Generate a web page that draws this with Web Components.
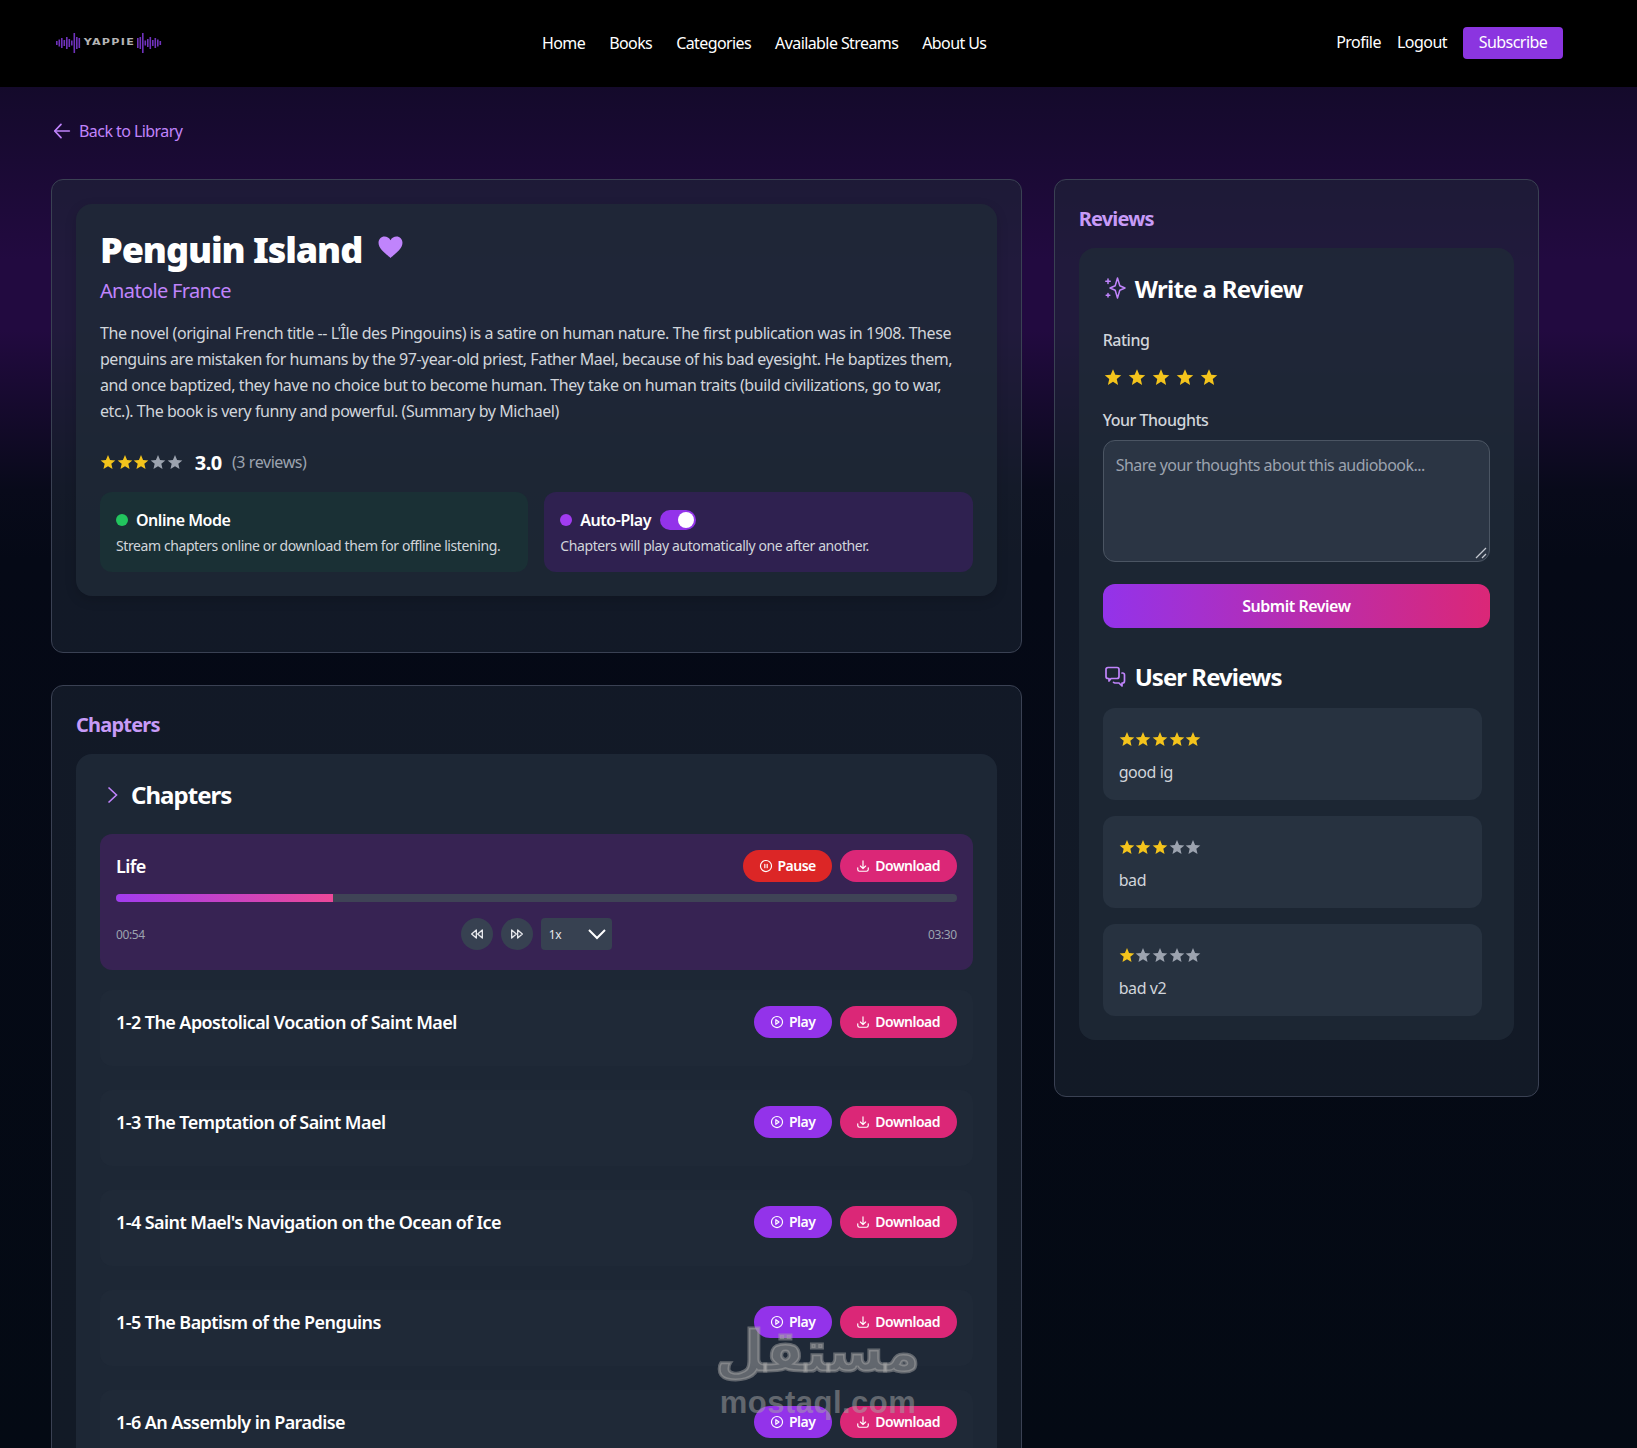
<!DOCTYPE html>
<html lang="en"><head><meta charset="utf-8"><title>Penguin Island</title>
<style>
html,body{margin:0;padding:0;height:1448px;overflow:hidden}
body{font-family:"Noto Sans","Open Sans",sans-serif;letter-spacing:-.026em;color:#fff;position:relative;
background:linear-gradient(180deg,#140a2b 87px,#220a40 260px,#220a40 330px,#120a28 430px,#080a1a 490px,#050916 560px,#040a14 1448px)}
main{display:grid;grid-template-columns:2fr 1fr;gap:32px;width:1488px;margin-left:51px;align-items:start}
main>div{display:flex;flex-direction:column;gap:32px;min-width:0}
</style></head><body>
<yp-header></yp-header>
<yp-back></yp-back>
<main>
<div>
<yp-card>
 <yp-book></yp-book>
</yp-card>
<yp-card heading="Chapters">
 <yp-chapters>
  <yp-chapter name="Life" playing></yp-chapter>
  <yp-chapter name="1-2 The Apostolical Vocation of Saint Mael"></yp-chapter>
  <yp-chapter name="1-3 The Temptation of Saint Mael"></yp-chapter>
  <yp-chapter name="1-4 Saint Mael's Navigation on the Ocean of Ice"></yp-chapter>
  <yp-chapter name="1-5 The Baptism of the Penguins"></yp-chapter>
  <yp-chapter name="1-6 An Assembly in Paradise"></yp-chapter>
 </yp-chapters>
</yp-card>
</div>
<div>
<yp-card heading="Reviews">
 <yp-reviews>
  <yp-review value="5">good ig</yp-review>
  <yp-review value="3">bad</yp-review>
  <yp-review value="1">bad v2</yp-review>
 </yp-reviews>
</yp-card>
</div>
</main>
<yp-watermark></yp-watermark>
<script>
const I={
 play:'<circle cx="12" cy="12" r="9.5"/><path d="M10 8l5.5 4-5.500 4z"/>',
 pause:'<circle cx="12" cy="12" r="9.5"/><path d="M10 9v6M14 9v6"/>',
 dl:'<path d="M3 15v3a3 3 0 0 0 3 3h12a3 3 0 0 0 3-3v-3"/><path d="M12 3v13M7.500 12l4.500 4.500 4.500-4.500"/>',
 back:'<path d="M12 4l-7.500 8 7.500 8"/><path d="M5 12H22"/>',
 rew:'<path d="M11 6l-7 6 7 6zM20 6l-7 6 7 6z"/>',
 ff:'<path d="M13 6l7 6-7 6zM4 6l7 6-7 6z"/>'
};
const svg=(p,s,extra='')=>`<svg viewBox="0 0 24 24" width="${s}" height="${s}" fill="none" stroke="currentColor" stroke-width="2" stroke-linecap="round" stroke-linejoin="round" ${extra}>${p}</svg>`;
class Base extends HTMLElement{
 connectedCallback(){if(this.shadowRoot)return;const r=this.attachShadow({mode:'open'});r.innerHTML=this.render()}
}
const def=(n,fn)=>customElements.define(n,class extends Base{render(){return fn(this)}});

def('yp-stars',el=>{
 const v=+el.getAttribute('value')||0,big=el.hasAttribute('big');
 let h='';for(let i=0;i<5;i++)h+=`<svg viewBox="0 0 24 24" fill="${i<v?'#f4c41c':'#9ca3af'}"><path d="M12 1.600l3.100 7.300 7.900.7-6 5.200 1.800 7.700-6.800-4.100-6.800 4.100 1.800-7.700-6-5.200 7.900-.7z"/></svg>`;
 return `<style>:host{display:inline-flex;align-items:center;gap:${big?6:.67}px}svg{width:${big?18:16}px;height:${big?18:16}px;display:block}</style>${h}`;
});

def('yp-header',()=>{
 const hs=[4,7,10,6,12,8,5,20,12,10];
 const draw=a=>a.map((h,i)=>`<rect x="${i*2.5}" y="${10-h/2}" width="1.6" height="${h}"/>`).join('');
 return `<style>
 :host{display:flex;align-items:center;height:87px;background:#000;padding:0 74px 0 56px;box-sizing:border-box}
 .logo{display:flex;align-items:center;width:106px;height:20px;color:#b4b4b4;font:700 8px "DejaVu Sans",sans-serif;letter-spacing:.9px;justify-content:space-between;margin-bottom:2px}
 .logo svg{fill:#6f32bb;display:block;flex:none}
 .logo span{display:block;transform:scaleX(1.4)}
 nav{display:flex;gap:24px;margin-left:380px}
 a{color:#fff;font-size:16px;text-decoration:none;line-height:24px;letter-spacing:-.037em;margin-bottom:2px}
 .r{margin-left:auto;display:flex;align-items:center;gap:16px;margin-bottom:1px}
 .r a{letter-spacing:-.033em}
 .sub{background:#8b35e0;border-radius:4px;width:100px;height:32px;display:flex;align-items:center;justify-content:center;margin-bottom:0;padding-bottom:2px;box-sizing:border-box}
 </style>
 <div class="logo"><svg width="25" height="20">${draw(hs)}</svg><span>YAPPIE</span><svg width="25" height="20">${draw([...hs].reverse())}</svg></div>
 <nav><a href="#">Home</a><a href="#">Books</a><a href="#">Categories</a><a href="#">Available Streams</a><a href="#">About Us</a></nav>
 <div class="r"><a href="#">Profile</a><a href="#">Logout</a><a class="sub" href="#">Subscribe</a></div>`;
});

def('yp-back',()=>`<style>
 :host{display:flex;align-items:center;gap:8px;margin:32px 0 36px 51px;height:24px;color:#c084fc;font-size:16px;letter-spacing:-.035em}
 svg{display:block}
 </style>${svg(I.back,20)}<span>Back to Library</span>`);

customElements.define('yp-card',class extends Base{render(){
 const h=this.getAttribute('heading');
 return `<style>
 :host{display:block;box-sizing:border-box;border:1px solid #3a4153;border-radius:12px;background:rgba(31,41,55,.5);padding:24px}
 h2{margin:0 0 14px;font-size:20px;line-height:30px;font-weight:700;color:#c79bf7;letter-spacing:-.04em}
 </style>${h?`<h2>${h}</h2>`:''}<slot></slot>`;
}});

def('yp-info',el=>{
 const t=el.getAttribute('tone');
 return `<style>
 :host{display:block;box-sizing:border-box;height:80px;padding:16px;border-radius:12px;background:${t=='green'?'#1a3035':'#2f2150'}}
 .t{display:flex;align-items:center;height:24px;font-size:16px;font-weight:600;color:#fff;letter-spacing:-.03em}
 i{width:12px;height:12px;border-radius:50%;background:${t=='green'?'#22c55e':'#a13cf0'};margin-right:8px}
 p{margin:4px 0 0;font-size:14px;line-height:20px;color:#d1d5db;letter-spacing:-.029em}
 .tg{width:36px;height:20px;border-radius:10px;background:#9333ea;margin-left:9px;position:relative}
 .tg::after{content:"";position:absolute;right:2px;top:2px;width:16px;height:16px;border-radius:50%;background:#fff}
 </style><div class="t"><i></i><span>${el.getAttribute('label')}</span>${t=='green'?'':'<div class="tg"></div>'}</div><p><slot></slot></p>`;
});

def('yp-book',()=>`<style>
 :host{display:block;border-radius:16px;background:rgba(31,41,55,.8);padding:24px;margin-bottom:32px;box-shadow:0 4px 12px rgba(0,0,0,.15)}
 h1{margin:0;display:flex;align-items:center;gap:16px;height:40px;font-size:36px;line-height:40px;font-weight:900;letter-spacing:-.03em}
 h1 span{margin-top:4px}
 h1 svg{display:block;margin-top:-2px}
 .a{margin-top:9px;font-size:20px;line-height:28px;color:#c084fc;letter-spacing:-.033em}
 .d{margin:15px 0 0;font-size:16px;line-height:26px;color:#d1d5db}
 .r{display:flex;align-items:center;margin-top:25px;height:28px;padding-bottom:2px;box-sizing:border-box}
 b{font-size:20px;margin-left:12px;font-weight:700}
 .c{margin-left:10px;color:#9ca3af;font-size:16px}
 .g{display:grid;grid-template-columns:1fr 1fr;gap:16px;margin-top:15px}
 </style>
 <h1><span>Penguin Island</span><svg width="25" height="22" viewBox="0 0 24 21" fill="#c084fc"><path d="M12 21C9 18 .5 13 .5 6.500 .5 3 3.100 .5 6.200 .5 8.600 .5 10.800 1.800 12 4 13.200 1.800 15.400 .5 17.800 .5 20.900 .5 23.500 3 23.500 6.500 23.500 13 15 18 12 21z"/></svg></h1>
 <div class="a">Anatole France</div>
 <p class="d">The novel (original French title -- L'Île des Pingouins) is a satire on human nature. The first publication was in 1908. These<br><span style="letter-spacing:-.0295em">penguins are mistaken for humans by the 97-year-old priest, Father Mael, because of his bad eyesight. He baptizes them,</span><br>and once baptized, they have no choice but to become human. They take on human traits (build civilizations, go to war,<br><span style="letter-spacing:-.0285em">etc.). The book is very funny and powerful. (Summary by Michael)</span></p>
 <div class="r"><yp-stars value="3"></yp-stars><b>3.0</b><span class="c">(3 reviews)</span></div>
 <div class="g"><yp-info tone="green" label="Online Mode">Stream chapters online or download them for offline listening.</yp-info><yp-info tone="purple" label="Auto-Play">Chapters will play automatically one after another.</yp-info></div>`);

customElements.define('yp-btn',class extends Base{render(){
 const k=this.getAttribute('kind');
 const c={play:'#9333ea',pause:'#dc2626',dl:'#db2777'}[k];
 const t={play:'Play',pause:'Pause',dl:'Download'}[k];
 const w={play:78,pause:89,dl:117}[k];
 return `<style>
 :host{display:inline-flex;align-items:center;justify-content:center;gap:5px;width:${w}px;height:32px;border-radius:16px;background:${c};color:#fff;font-size:14px;font-weight:600;box-sizing:border-box;letter-spacing:-.036em}
 svg{display:block}
 span{margin-bottom:2px}
 </style>${svg(I[k],14,'')}<span>${t}</span>`;
}});

def('yp-chapters',()=>`<style>
 :host{display:block;border-radius:16px;background:rgba(31,41,55,.9);padding:24px}
 .h{display:flex;align-items:center;gap:7px;height:34px;margin-bottom:22px;color:#c084fc}
 h3{margin:0;font-size:24px;line-height:34px;font-weight:700;color:#fff;letter-spacing:-.04em}
 svg{display:block}
 </style><div class="h"><svg width="24" height="24" viewBox="0 0 24 24" fill="none" stroke="currentColor" stroke-width="1.600"><path d="M8.500 4.500L16.500 12 8.500 19.500"/></svg><h3>Chapters</h3></div><slot></slot>`);

customElements.define('yp-chapter',class extends Base{render(){
 const p=this.hasAttribute('playing');
 return `<style>
 :host{display:block;box-sizing:border-box;border-radius:12px;padding:16px;background:${p?'#372353':'#1f2937'};height:${p?136:76}px;margin-bottom:${p?20:24}px}
 .t{display:flex;align-items:center;justify-content:space-between;height:32px}
 .n{font-size:18px;font-weight:600;color:#fff;letter-spacing:-.032em}
 .b{display:flex;gap:8px}
 .p{height:8px;margin-top:12px;background:#3f4356;border-radius:4px;overflow:hidden}
 .p div{height:100%;width:25.8%;background:linear-gradient(90deg,#a13cf0,#ec4899)}
 .c{display:flex;align-items:center;justify-content:space-between;margin-top:16px;height:32px;font-size:12px;color:#9ca3af}
 .m{display:flex;gap:8px;align-items:center}
 .o{width:32px;height:32px;border-radius:50%;background:#374151;color:#e5e7eb;display:flex;align-items:center;justify-content:center}
 .s{width:71px;height:32px;border-radius:4px;background:#374151;color:#e5e7eb;display:flex;align-items:center;justify-content:space-between;padding:0 5px 0 8px;box-sizing:border-box;font-size:12px}
 .s svg{margin-top:1px}
 svg{display:block}
 </style>
 <div class="t"><span class="n">${this.getAttribute('name')}</span><span class="b"><yp-btn kind="${p?'pause':'play'}"></yp-btn><yp-btn kind="dl"></yp-btn></span></div>
 ${p?`<div class="p"><div></div></div><div class="c"><span>00:54</span><div class="m"><div class="o">${svg(I.rew,16,'stroke-width="1.8"')}</div><div class="o">${svg(I.ff,16)}</div><div class="s"><span>1x</span><svg width="20" height="20" viewBox="0 0 20 20" fill="none" stroke="#fff" stroke-width="2"><path d="M2 5l8 8 8-8"/></svg></div></div><span>03:30</span></div>`:''}`;
}});

customElements.define('yp-review',class extends Base{render(){
 return `<style>
 :host{display:block;box-sizing:border-box;height:92px;padding:16px;margin:0 8px 16px 0;border-radius:12px;background:#273240;color:#d1d5db;font-size:16px}
 :host(:last-of-type){margin-bottom:0}
 .s{height:28px;display:flex;align-items:center;padding-top:2px;box-sizing:border-box}
 .x{margin-top:8px;line-height:24px}
 </style><div class="s"><yp-stars value="${this.getAttribute('value')}"></yp-stars></div><div class="x"><slot></slot></div>`;
}});

def('yp-reviews',()=>`<style>
 :host{display:block;border-radius:16px;background:rgba(31,41,55,.8);padding:24px;margin-bottom:32px}
 .h{display:flex;align-items:center;gap:8px;height:36px;color:#c084fc}
 h3{margin:0;font-size:24px;line-height:36px;font-weight:700;color:#fff;letter-spacing:-.04em}
 label{display:block;font-size:16px;line-height:24px;color:#d1d5db;font-weight:500;letter-spacing:-.03em}
 .ta{margin-top:8px;height:122px;box-sizing:border-box;border:1px solid #4b5563;border-radius:12px;background:#2b3544;color:#9ca3af;padding:12px;line-height:24px;position:relative;letter-spacing:-.032em}
 .ta svg{position:absolute;right:1px;bottom:1px}
 button{display:block;width:100%;height:44px;margin-top:22px;border:0;border-radius:12px;background:linear-gradient(90deg,#9333ea,#db2777);color:#fff;font:600 16px "Noto Sans",sans-serif;letter-spacing:-.03em}
 .l{margin-top:13px}
 svg{display:block}
 </style>
 <div class="h"><svg style="margin-top:-4px" width="24" height="24" viewBox="0 0 24 24" fill="none" stroke="currentColor" stroke-width="1.500" stroke-linecap="round" stroke-linejoin="round"><path d="M14.500 2L16.800 9.700 22 12 16.800 14.300 14.500 22 12.200 14.300 7 12 12.200 9.700z"/><path d="M5 3v4.500M2.800 5.200h4.400M5 17.500v3.500M3.200 19.200h3.600"/></svg><h3 style="margin-bottom:2px;letter-spacing:-.028em">Write a Review</h3></div>
 <label style="margin-top:20px">Rating</label>
 <div style="margin:13px 0 0 1px;height:24px;display:flex;align-items:center"><yp-stars value="5" big></yp-stars></div>
 <label style="margin-top:19px">Your Thoughts</label>
 <div class="ta">Share your thoughts about this audiobook...<svg width="14" height="14" viewBox="0 0 14 14" stroke="#c4c8d0" stroke-width="1.300"><path d="M2 12L12 2M8 12l4-4"/></svg></div>
 <button>Submit Review</button>
 <div class="h" style="margin-top:31px"><svg width="24" height="24" viewBox="0 0 24 24" fill="none" stroke="currentColor" stroke-width="1.700" stroke-linecap="round" stroke-linejoin="round"><path d="M3 4.500a2 2 0 0 1 2-2h9a2 2 0 0 1 2 2v7a2 2 0 0 1-2 2H8l-2 2.500v-2.500H5a2 2 0 0 1-2-2z"/><path d="M19 8h.5a2 2 0 0 1 2 2v6a2 2 0 0 1-2 2h-.5v3l-3-3h-4a2 2 0 0 1-1.500-.7"/></svg><h3>User Reviews</h3></div>
 <div class="l"><slot></slot></div>`);

def('yp-watermark',()=>`<style>
 :host{position:absolute;left:716px;top:1316px;width:204px;text-align:center;color:rgba(165,165,165,.5);pointer-events:none}
 .a{font:700 56px/72px "DejaVu Sans",sans-serif;letter-spacing:0;-webkit-text-stroke:3px rgba(165,165,165,.5)}
 .b{font:700 31px/30px "Liberation Sans",sans-serif;letter-spacing:.5px}
 </style><div class="a" dir="rtl">مستقل</div><div class="b">mostaql.com</div>`);
</script>
</body></html>
